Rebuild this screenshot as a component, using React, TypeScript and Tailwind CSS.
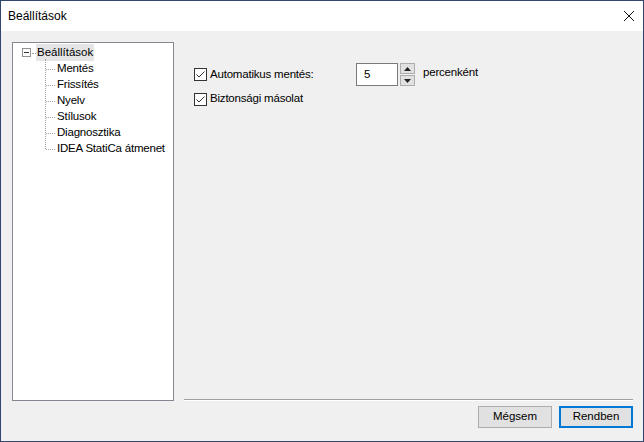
import React from "react";

const Check = () => (
  <span className="w-[13px] h-[13px] border border-[#333333] bg-white flex items-center justify-center shrink-0">
    <svg width="11" height="11" viewBox="0 0 11 11">
      <path d="M1.5 5.5 L4 8 L9.5 2.5" fill="none" stroke="#333" strokeWidth="1" />
    </svg>
  </span>
);

const items = ["Mentés", "Frissítés", "Nyelv", "Stílusok", "Diagnosztika", "IDEA StatiCa átmenet"];

export default function App() {
  return (
    <div
      className="w-[644px] h-[442px] border border-[#34466e] bg-[#f0f0f0] flex flex-col text-[11.5px] text-black"
      style={{ fontFamily: '"Segoe UI", "Liberation Sans", Arial, sans-serif' }}
    >
      <div className="h-[30px] bg-white flex items-center justify-between pl-[7px] pr-[8px] shrink-0">
        <span className="text-[12px]">Beállítások</span>
        <svg width="12" height="12" viewBox="0 0 12 12">
          <path d="M1 1 L11 11 M11 1 L1 11" stroke="#111" strokeWidth="1" />
        </svg>
      </div>
      <div className="flex-1 flex flex-col pl-[11px] pr-[10px] pt-[11px]">
        <div className="flex h-[359px]">
          <div className="w-[162px] h-full border border-[#828790] bg-white relative">
            <div className="absolute left-[9px] top-[5px] w-[9px] h-[9px] border border-[#919191] bg-white flex items-center justify-center">
              <span className="w-[5px] h-[1px] bg-[#333]" />
            </div>
            <div className="absolute left-[19px] top-[10px] w-[4px] border-t border-dotted border-[#a0a0a0]" />
            <div className="absolute left-[23px] top-[1px] h-[17px] px-[1px] bg-[#e5e5e5] flex items-center leading-none whitespace-nowrap">
              Beállítások
            </div>
            <div className="absolute left-[32px] top-[16px] h-[90px] border-l border-dotted border-[#a0a0a0]" />
            {items.map((t, i) => (
              <div key={t} className="absolute left-[33px] flex items-center h-[16px] whitespace-nowrap" style={{ top: 18 + i * 16 }}>
                <span className="w-[9px] border-t border-dotted border-[#a0a0a0] mr-[2px]" />
                <span className="leading-none tracking-[-0.2px]">{t}</span>
              </div>
            ))}
          </div>
          <div className="flex-1 ml-[10px] flex flex-col">
            <div className="pl-[10px] pt-[21px] flex flex-col">
              <div className="flex items-center h-[23px] whitespace-nowrap">
                <Check />
                <span className="ml-[3px] w-[146px] tracking-[-0.2px]">Automatikus mentés:</span>
                <div className="w-[42px] h-[23px] border border-[#7a7a7a] bg-white flex items-center pl-[7px]">5</div>
                <div className="ml-[2px] w-[15px] h-[23px] flex flex-col gap-[1px]">
                  <div className="flex-1 bg-[#e1e1e1] border border-[#adadad] flex items-center justify-center">
                    <svg width="7" height="4" viewBox="0 0 7 4"><path d="M0 4 L3.5 0 L7 4Z" fill="#222" /></svg>
                  </div>
                  <div className="flex-1 bg-[#e1e1e1] border border-[#adadad] flex items-center justify-center">
                    <svg width="7" height="4" viewBox="0 0 7 4"><path d="M0 0 L3.5 4 L7 0Z" fill="#222" /></svg>
                  </div>
                </div>
                <span className="ml-[8px] -mt-[4px] tracking-[-0.2px]">percenként</span>
              </div>
              <div className="flex items-center mt-[5px] h-[16px] whitespace-nowrap">
                <Check />
                <span className="ml-[3px] tracking-[-0.2px]">Biztonsági másolat</span>
              </div>
            </div>
            <div className="mt-auto h-[2px] flex flex-col">
              <div className="h-[1px] bg-[#a0a0a0]" />
              <div className="h-[1px] bg-white" />
            </div>
          </div>
        </div>
        <div className="flex justify-end gap-[7px] mt-[5px]">
          <button className="w-[74px] h-[22px] bg-[#e1e1e1] border border-[#adadad] text-[11.5px] leading-none">Mégsem</button>
          <button className="w-[74px] h-[22px] bg-[#e1e1e1] border-2 border-[#0078d7] text-[11.5px] leading-none">Rendben</button>
        </div>
      </div>
    </div>
  );
}
